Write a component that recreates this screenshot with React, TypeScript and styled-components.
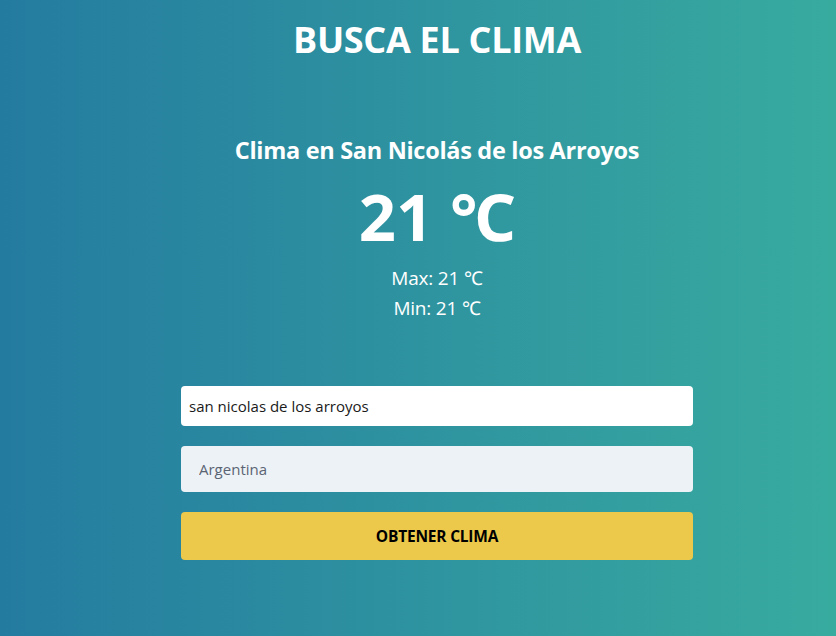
import React from "react";
import styled, { createGlobalStyle } from "styled-components";

const Global = createGlobalStyle`
  html, body { margin: 0; padding: 0; }
  body {
    font-family: "Open Sans", "Noto Sans", sans-serif;
    background: linear-gradient(to right, #247ba0, #38ab9f);
    min-height: 636px;
    color: #fff;
  }
  * { box-sizing: border-box; }
`;

const Page = styled.main`
  min-height: 636px;
  display: flex;
  flex-direction: column;
  align-items: center;
  padding: 20px 0 0 38px;
`;

const Title = styled.h1`
  margin: 0;
  font-size: 36px;
  line-height: 40px;
  font-weight: 700;
  letter-spacing: -0.3px;
`;

const Result = styled.section`
  margin-top: 74px;
  display: flex;
  flex-direction: column;
  align-items: center;
`;

const City = styled.h2`
  margin: 0;
  font-size: 23.5px;
  line-height: 32px;
  font-weight: 700;
  letter-spacing: -0.3px;
`;

const Temp = styled.p`
  margin: 14px 0 11px;
  font-size: 65px;
  line-height: 72px;
  font-weight: 700;
`;

const Range = styled.p`
  margin: 0;
  font-size: 19px;
  line-height: 30px;
  letter-spacing: -0.2px;
`;

const Form = styled.form`
  margin-top: 63px;
  width: 512px;
  display: flex;
  flex-direction: column;
  gap: 20px;
`;

const Input = styled.input<{ $filled?: boolean }>`
  width: 100%;
  border: none;
  border-radius: 4px;
  outline: none;
  font-family: inherit;
  font-size: 15px;
  color: #1a1a1a;
  background: ${(p) => (p.$filled ? "#ffffff" : "#edf2f7")};
  height: ${(p) => (p.$filled ? "40px" : "46px")};
  padding: ${(p) => (p.$filled ? "0 8px" : "0 18px")};
  &::placeholder { color: #5a6473; }
`;

const Button = styled.button`
  height: 48px;
  border: none;
  border-radius: 4px;
  background: #ecc94b;
  color: #000;
  font-family: inherit;
  font-weight: 700;
  font-size: 15.5px;
  letter-spacing: -0.2px;
  text-transform: uppercase;
  cursor: pointer;
`;

export default function App() {
  return (
    <>
      <Global />
      <Page>
        <Title>BUSCA EL CLIMA</Title>
        <Result>
          <City>Clima en San Nicolás de los Arroyos</City>
          <Temp>21 ℃</Temp>
          <Range>Max: 21 ℃</Range>
          <Range>Min: 21 ℃</Range>
        </Result>
        <Form onSubmit={(e) => e.preventDefault()}>
          <Input $filled defaultValue="san nicolas de los arroyos" />
          <Input placeholder="Argentina" />
          <Button type="submit">Obtener clima</Button>
        </Form>
      </Page>
    </>
  );
}
